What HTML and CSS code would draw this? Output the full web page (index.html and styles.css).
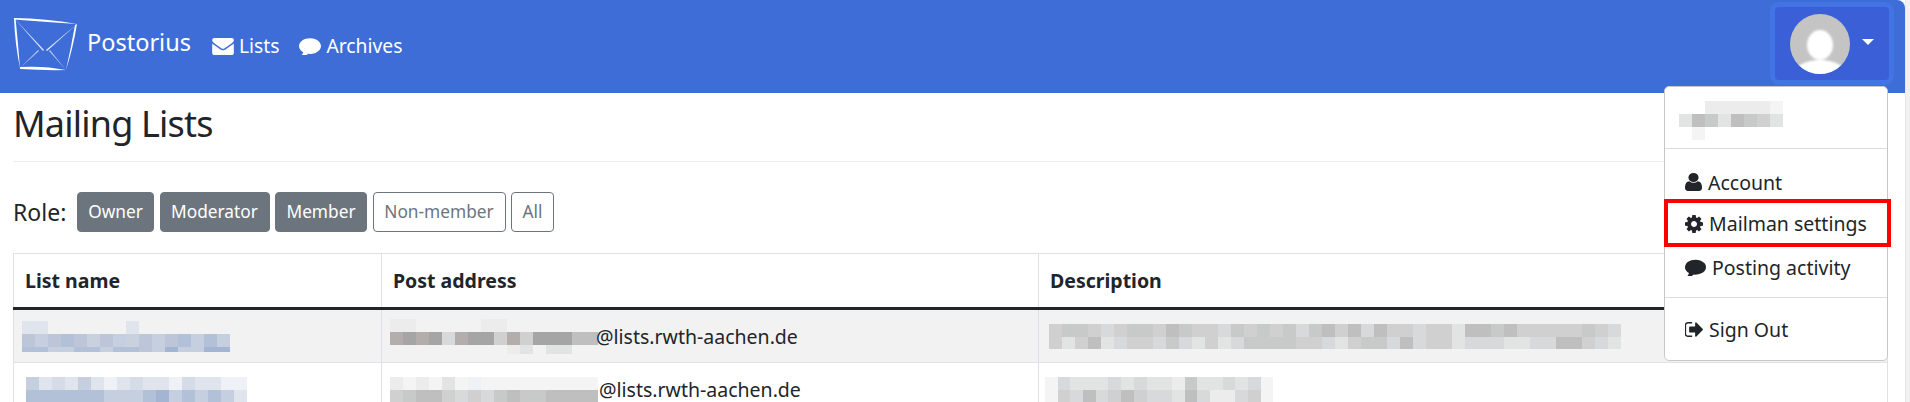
FILE: index.html
```html
<!DOCTYPE html>
<html lang="en">
<head>
    <meta charset="UTF-8">
    <title>Mailing Lists</title>
    <link rel="stylesheet" href="styles.css">
</head>
<body>
    <svg class="icon-defs" xmlns="http://www.w3.org/2000/svg">
        <symbol id="i-envelope" viewBox="0 256 1792 1408"><path d="M1792 710v794q0 66-47 113t-113 47h-1472q-66 0-113-47t-47-113v-794q44 49 101 87 362 246 497 345 57 42 92.5 65.5t94.5 48 110 24.5h2q51 0 110-24.5t94.5-48 92.5-65.5q170-123 498-345 57-39 100-87zm0-294q0 79-49 151t-122 123q-376 261-468 325-10 7-42.5 30.5t-54 38-52 32.5-57.5 27-50 9h-2q-23 0-50-9t-57.5-27-52-32.5-54-38-42.5-30.5q-91-64-262-182.5t-205-142.5q-62-42-117-115.5t-55-136.5q0-78 41.5-130t118.5-52h1472q65 0 112.5 47t47.5 113z"/></symbol>
        <symbol id="i-comment" viewBox="0 256 1792 1344"><path d="M1792 896q0 174-120 321.5t-326 233-450 85.5q-70 0-145-8-198 175-460 242-49 14-114 22-17 2-30.5-9t-17.5-29v-1q-3-4-.5-12t2-10 4.5-9.5l6-9 7-8.5 8-9q7-8 31-34.5t34.5-38 31-39.5 32.5-51 27-59 26-76q-157-89-247.5-220t-90.5-281q0-130 71-248.5t191-204.5 286-136.5 348-50.5q244 0 450 85.5t326 233 120 321.5z"/></symbol>
        <symbol id="i-user" viewBox="256 128 1280 1536" preserveAspectRatio="none"><path d="M1536 1399q0 109-62.5 187t-150.5 78h-854q-88 0-150.5-78t-62.5-187q0-85 8.5-160.5t31.5-152 58.5-131 94-89 134.5-34.5q131 128 313 128t313-128q76 0 134.5 34.5t94 89 58.5 131 31.5 152 8.5 160.5zm-256-887q0 159-112.5 271.5t-271.5 112.5-271.5-112.5-112.5-271.5 112.5-271.5 271.5-112.5 271.5 112.5 112.5 271.5z"/></symbol>
        <symbol id="i-cog" viewBox="128 128 1536 1536"><path d="M1152 896q0-106-75-181t-181-75-181 75-75 181 75 181 181 75 181-75 75-181zm512-109v222q0 12-8 23t-20 13l-185 28q-19 54-39 91 35 50 107 138 10 12 10 25t-9 23q-27 37-99 108t-94 71q-12 0-26-9l-138-108q-44 23-91 38-16 136-29 186-7 28-36 28h-222q-14 0-24.5-8.5t-11.5-21.5l-28-184q-49-16-90-37l-141 107q-10 9-25 9-14 0-25-11-126-114-165-168-7-10-7-23 0-12 8-23 15-21 51-66.5t54-70.5q-27-50-41-99l-183-27q-13-2-21-12.5t-8-23.5v-222q0-12 8-23t19-13l186-28q14-46 39-92-40-57-107-138-10-12-10-24 0-10 9-23 26-36 98.5-107.5t94.5-71.5q13 0 26 10l138 107q44-23 91-38 16-136 29-186 7-28 36-28h222q14 0 24.5 8.5t11.5 21.5l28 184q49 16 90 37l142-107q9-9 24-9 13 0 25 10 129 119 165 170 7 8 7 22 0 12-8 23-15 21-51 66.5t-54 70.5q26 50 41 98l183 28q13 2 21 12.5t8 23.5z"/></symbol>
        <symbol id="i-signout" viewBox="96 256 1536 1280"><path d="M704 1440q0 4 1 20t.5 26.5-3 23.5-10 19.5-20.5 6.5h-320q-119 0-203.5-84.5t-84.5-203.5v-704q0-119 84.5-203.5t203.5-84.5h320q13 0 22.5 9.5t9.5 22.5q0 4 1 20t.5 26.5-3 23.5-10 19.5-20.5 6.5h-320q-66 0-113 47t-47 113v704q0 66 47 113t113 47h312l11.5 1 11.5 3 8 5.5 7 9 2 13.5zm928-544q0 26-19 45l-544 544q-19 19-45 19t-45-19-19-45v-288h-448q-26 0-45-19t-19-45v-384q0-26 19-45t45-19h448v-288q0-26 19-45t45-19 45 19l544 544q19 19 19 45z"/></symbol>
    </svg>

    <div class="page">
        <div class="content">
            <nav class="navbar">
                <a href="#" class="brand">
                    <svg class="brand-logo" viewBox="0 0 64 54" fill="#fff">
                        <path d="M0 0Q32 .5 63 6Q32 4 0 1.500z"/>
                        <path d="M0 0Q1 26 6 50Q4 25 1.500 0z"/>
                        <path d="M6 49Q30 47.500 52 52Q30 52.500 6 51z"/>
                        <path d="M63 6Q59 30 52 52Q57 30 61 7z"/>
                        <path d="M0 0L30 32L29 33z" opacity=".85"/>
                        <path d="M63 6L33 33L32 32z" opacity=".85"/>
                        <path d="M6 50L24 32L25 33z" opacity=".6"/>
                        <path d="M52 52L36 32L35 33z" opacity=".6"/>
                    </svg>
                    <span>Postorius</span>
                </a>
                <a href="#" class="nav-link"><svg class="nav-icon"><use href="#i-envelope"/></svg>Lists</a>
                <a href="#" class="nav-link"><svg class="nav-icon"><use href="#i-comment"/></svg>Archives</a>

                <div class="user-menu">
                    <a href="#" class="user-toggle">
                        <svg class="avatar" viewBox="0 0 60 60">
                            <defs>
                                <clipPath id="avatar-clip"><circle cx="30" cy="30" r="30"/></clipPath>
                                <filter id="avatar-blur"><feGaussianBlur stdDeviation=".8"/></filter>
                            </defs>
                            <circle cx="30" cy="30" r="30" fill="#c4c4c4"/>
                            <g clip-path="url(#avatar-clip)" fill="#fff">
                                <g filter="url(#avatar-blur)">
                                    <ellipse cx="30" cy="31" rx="13" ry="15"/>
                                    <ellipse cx="30" cy="59" rx="25" ry="13"/>
                                </g>
                            </g>
                        </svg>
                        <span class="caret"></span>
                    </a>
                    <div class="dropdown">
                        <div class="dropdown-name">
                            <div class="mosaic m-name">
                                <i class="o"></i><i class="o"></i><i class="f"></i><i class="f"></i><i class="f"></i><i class="f"></i><i class="f"></i><i class="g"></i>
                                <i class="e"></i><i class="a"></i><i class="b"></i><i class="e"></i><i class="a"></i><i class="b"></i><i class="c"></i><i class="e"></i>
                                <i class="o"></i><i class="g"></i><i class="o"></i><i class="o"></i><i class="o"></i><i class="o"></i><i class="o"></i><i class="o"></i>
                            </div>
                        </div>
                        <a href="#" class="dropdown-item item-account"><svg class="item-icon icon-user"><use href="#i-user"/></svg>Account</a>
                        <a href="#" class="dropdown-item item-marked"><svg class="item-icon icon-cog"><use href="#i-cog"/></svg>Mailman settings</a>
                        <a href="#" class="dropdown-item item-activity"><svg class="item-icon icon-comment"><use href="#i-comment"/></svg>Posting activity</a>
                        <a href="#" class="dropdown-item item-signout"><svg class="item-icon icon-signout"><use href="#i-signout"/></svg>Sign Out</a>
                    </div>
                </div>
            </nav>

            <main class="main">
                <h1 class="page-title">Mailing Lists</h1>

                <div class="role-filter">
                    <span class="role-label">Role:</span>
                    <a href="#" class="btn btn-active btn-owner">Owner</a>
                    <a href="#" class="btn btn-active btn-moderator">Moderator</a>
                    <a href="#" class="btn btn-active btn-member">Member</a>
                    <a href="#" class="btn btn-outline btn-nonmember">Non-member</a>
                    <a href="#" class="btn btn-outline btn-all">All</a>
                </div>

                <table class="lists">
                    <colgroup>
                        <col class="col-name">
                        <col class="col-post">
                        <col class="col-desc">
                    </colgroup>
                    <thead>
                        <tr><th>List name</th><th>Post address</th><th>Description</th></tr>
                    </thead>
                    <tbody>
                        <tr class="row-odd">
                            <td>
                                <div class="mosaic m-list1">
                                    <i class="q"></i><i class="q"></i><i class="o"></i><i class="o"></i><i class="o"></i><i class="o"></i><i class="o"></i><i class="o"></i><i class="q"></i><i class="o"></i><i class="o"></i><i class="o"></i><i class="o"></i><i class="o"></i><i class="o"></i><i class="o"></i>
                                    <i class="r"></i><i class="s"></i><i class="r"></i><i class="t"></i><i class="r"></i><i class="p"></i><i class="r"></i><i class="s"></i><i class="p"></i><i class="r"></i><i class="s"></i><i class="r"></i><i class="t"></i><i class="s"></i><i class="t"></i><i class="s"></i>
                                    <i class="t"></i><i class="t"></i><i class="s"></i><i class="s"></i><i class="t"></i><i class="t"></i><i class="s"></i><i class="t"></i><i class="t"></i><i class="r"></i><i class="s"></i><i class="u"></i><i class="s"></i><i class="s"></i><i class="u"></i><i class="u"></i>
                                </div>
                            </td>
                            <td>
                                <div class="address">
                                    <div class="mosaic m-post1">
                                        <i class="f"></i><i class="f"></i><i class="o"></i><i class="o"></i><i class="o"></i><i class="o"></i><i class="o"></i><i class="f"></i><i class="f"></i><i class="o"></i><i class="o"></i><i class="o"></i><i class="o"></i><i class="o"></i><i class="o"></i><i class="o"></i>
                                        <i class="v"></i><i class="w"></i><i class="v"></i><i class="w"></i><i class="d"></i><i class="v"></i><i class="w"></i><i class="w"></i><i class="c"></i><i class="v"></i><i class="c"></i><i class="w"></i><i class="w"></i><i class="w"></i><i class="a"></i><i class="a"></i>
                                        <i class="o"></i><i class="o"></i><i class="o"></i><i class="o"></i><i class="o"></i><i class="o"></i><i class="o"></i><i class="o"></i><i class="o"></i><i class="f"></i><i class="e"></i><i class="o"></i><i class="e"></i><i class="e"></i><i class="o"></i><i class="o"></i>
                                    </div>
                                    <span>@lists.rwth-aachen.de</span>
                                </div>
                            </td>
                            <td>
                                <div class="mosaic m-desc1">
                                    <i class="c"></i><i class="b"></i><i class="b"></i><i class="c"></i><i class="d"></i><i class="c"></i><i class="b"></i><i class="b"></i><i class="c"></i><i class="a"></i><i class="b"></i><i class="c"></i><i class="c"></i><i class="d"></i><i class="b"></i><i class="c"></i><i class="b"></i><i class="c"></i><i class="b"></i><i class="d"></i><i class="b"></i><i class="a"></i><i class="c"></i><i class="a"></i><i class="d"></i><i class="a"></i><i class="c"></i><i class="c"></i><i class="d"></i><i class="c"></i><i class="c"></i><i class="e"></i><i class="a"></i><i class="a"></i><i class="b"></i><i class="a"></i><i class="c"></i><i class="c"></i><i class="c"></i><i class="c"></i><i class="c"></i><i class="b"></i><i class="c"></i><i class="d"></i>
                                    <i class="c"></i><i class="e"></i><i class="c"></i><i class="a"></i><i class="e"></i><i class="d"></i><i class="c"></i><i class="c"></i><i class="d"></i><i class="b"></i><i class="d"></i><i class="e"></i><i class="c"></i><i class="e"></i><i class="d"></i><i class="b"></i><i class="b"></i><i class="b"></i><i class="b"></i><i class="c"></i><i class="c"></i><i class="d"></i><i class="e"></i><i class="c"></i><i class="b"></i><i class="b"></i><i class="d"></i><i class="a"></i><i class="d"></i><i class="c"></i><i class="c"></i><i class="e"></i><i class="d"></i><i class="d"></i><i class="d"></i><i class="e"></i><i class="e"></i><i class="d"></i><i class="d"></i><i class="a"></i><i class="a"></i><i class="c"></i><i class="d"></i><i class="e"></i>
                                </div>
                            </td>
                        </tr>
                        <tr>
                            <td>
                                <div class="mosaic m-list2">
                                    <i class="s"></i><i class="q"></i><i class="s2"></i><i class="q"></i><i class="s"></i><i class="q"></i><i class="x"></i><i class="q"></i><i class="s2"></i><i class="q"></i><i class="q"></i><i class="x"></i><i class="s2"></i><i class="q"></i><i class="q"></i><i class="x"></i><i class="x"></i>
                                    <i class="t"></i><i class="t"></i><i class="t"></i><i class="t"></i><i class="t"></i><i class="t"></i><i class="s"></i><i class="s"></i><i class="s"></i><i class="t"></i><i class="u"></i><i class="s"></i><i class="t"></i><i class="s"></i><i class="t"></i><i class="s"></i><i class="q"></i>
                                </div>
                            </td>
                            <td>
                                <div class="address">
                                    <div class="mosaic m-post2">
                                        <i class="f"></i><i class="g"></i><i class="f"></i><i class="g"></i><i class="e"></i><i class="g"></i><i class="x"></i><i class="g"></i><i class="g"></i><i class="g"></i><i class="g"></i><i class="g"></i><i class="g"></i><i class="g"></i><i class="g"></i><i class="g"></i>
                                        <i class="c"></i><i class="b"></i><i class="a"></i><i class="a"></i><i class="c"></i><i class="d"></i><i class="c"></i><i class="d"></i><i class="b"></i><i class="a"></i><i class="b"></i><i class="b"></i><i class="a"></i><i class="a"></i><i class="a"></i><i class="a"></i>
                                    </div>
                                    <span>@lists.rwth-aachen.de</span>
                                </div>
                            </td>
                            <td>
                                <div class="mosaic m-desc2">
                                    <i class="g"></i><i class="d"></i><i class="e"></i><i class="e"></i><i class="e"></i><i class="d"></i><i class="e"></i><i class="d"></i><i class="e"></i><i class="e"></i><i class="f"></i><i class="b"></i><i class="e"></i><i class="e"></i><i class="d"></i><i class="e"></i><i class="d"></i><i class="g"></i>
                                    <i class="g"></i><i class="c"></i><i class="d"></i><i class="a"></i><i class="d"></i><i class="c"></i><i class="a"></i><i class="c"></i><i class="d"></i><i class="d"></i><i class="e"></i><i class="a"></i><i class="d"></i><i class="f"></i><i class="f"></i><i class="d"></i><i class="c"></i><i class="g"></i>
                                </div>
                            </td>
                        </tr>
                    </tbody>
                </table>
            </main>
        </div>
        <div class="scrollbar"></div>
    </div>
</body>
</html>
```

FILE: styles.css
```css
* {
    margin: 0;
    padding: 0;
    box-sizing: border-box;
}
html, body {
    height: 402px;
    overflow: hidden;
}
body {
    font-family: "Noto Sans", "Open Sans", sans-serif;
    color: #212529;
    background: #fff;
}
a {
    text-decoration: none;
    color: inherit;
}
.icon-defs {
    display: none;
}
.page {
    display: flex;
    height: 402px;
}
.content {
    flex: 1;
    min-width: 0;
}
.scrollbar {
    width: 5px;
    background: #f1f1f1;
    border-left: 1px solid #e6e6e6;
}

/* navbar */
.navbar {
    display: flex;
    align-items: flex-start;
    height: 93px;
    padding-left: 14px;
    background: #3f6dd8;
    color: #fff;
    border-top-right-radius: 8px;
}
.brand {
    display: flex;
    align-items: flex-start;
    margin-right: 21px;
    padding-top: 18px;
    font-size: 23.5px;
}
.brand-logo {
    width: 64px;
    height: 54px;
    margin-right: 9px;
}
.brand span {
    line-height: 32px;
    padding-top: 8px;
}
.nav-link {
    display: flex;
    align-items: center;
    margin-right: 20px;
    padding-top: 33px;
    font-size: 19.3px;
    line-height: 26px;
}
.nav-icon {
    width: 22px;
    height: 17px;
    margin-right: 5px;
    fill: #fff;
}
.user-menu {
    position: relative;
    margin-left: auto;
    margin-right: 11px;
    margin-top: 2px;
}
.user-toggle {
    display: flex;
    align-items: center;
    width: 124px;
    height: 83px;
    padding: 0 0 0 15px;
    background: #3a5fd6;
    border: 5px solid #4274e4;
    border-radius: 9px;
}
.avatar {
    width: 60px;
    height: 60px;
}
.caret {
    margin-left: 12px;
    margin-top: -3px;
    border-top: 6px solid #fff;
    border-left: 6px solid transparent;
    border-right: 6px solid transparent;
}

/* dropdown */
.dropdown {
    position: absolute;
    top: 84px;
    right: 6px;
    width: 224px;
    height: 275px;
    background: #fff;
    color: #212529;
    border: 1px solid #c8c8c8;
    border-radius: 5px;
    z-index: 10;
}
.dropdown-name {
    height: 62px;
    padding: 14px 0 0 14px;
    border-bottom: 1px solid #dcdcdc;
}
.dropdown-item {
    display: flex;
    align-items: center;
    padding-left: 20px;
    font-size: 19.5px;
}
.item-icon {
    flex: none;
    margin-right: 6px;
    fill: #212529;
}
.icon-user {
    width: 17px;
    height: 18px;
}
.icon-cog {
    width: 18px;
    height: 18px;
}
.icon-comment {
    width: 21px;
    height: 17px;
}
.icon-signout {
    width: 18px;
    height: 15px;
}
.item-account {
    height: 50px;
    padding-top: 16px;
}
.item-marked {
    height: 48px;
    margin-right: -4px;
    margin-left: -1px;
    padding-left: 17px;
    padding-top: 1px;
    border: 4px solid #f00;
}
.item-activity {
    height: 51px;
    padding-bottom: 10px;
    border-bottom: 1px solid #dcdcdc;
}
.item-signout {
    height: 63px;
}

/* main */
.main {
    padding: 0 17px 0 13px;
}
.page-title {
    height: 69px;
    font-size: 36px;
    font-weight: 400;
    line-height: 62px;
    letter-spacing: -0.8px;
    border-bottom: 1px solid #eceeef;
}
.role-filter {
    display: flex;
    align-items: center;
    gap: 5.5px;
    height: 40px;
    margin: 30px 0 21px;
}
.role-label {
    width: 58.5px;
    font-size: 23px;
}
.btn {
    height: 40px;
    font-size: 17.3px;
    line-height: 38px;
    text-align: center;
    border: 1px solid #6c757d;
    border-radius: 4px;
}
.btn-owner {
    width: 77px;
}
.btn-moderator {
    width: 110px;
}
.btn-member {
    width: 92px;
}
.btn-nonmember {
    width: 133px;
}
.btn-all {
    width: 43px;
}
.btn-active {
    background: #6c757d;
    color: #fff;
}
.btn-outline {
    color: #6c757d;
    background: #fff;
}

/* table */
.lists {
    width: 100%;
    table-layout: fixed;
    border-collapse: collapse;
    border: 1px solid #dee2e6;
    font-size: 19.5px;
}
.col-name {
    width: 368px;
}
.col-post {
    width: 657px;
}
.lists th, .lists td {
    border: 1px solid #dee2e6;
    padding: 0 11px;
    text-align: left;
}
.lists th {
    height: 55px;
    font-weight: 700;
    border-bottom: 3px solid #212529;
}
.lists td {
    height: 54px;
}
.row-odd {
    background: #f2f2f2;
}
.address {
    display: flex;
    align-items: center;
}

/* pixelated parts of the screenshot */
.mosaic {
    display: grid;
    flex: none;
}
.mosaic i {
    display: block;
}
.m-name {
    grid-template-columns: repeat(8, 13px);
    grid-auto-rows: 13px;
}
.m-list1 {
    grid-template-columns: repeat(16, 13px);
    grid-template-rows: 13px 13px 5px;
    margin-left: -3px;
}
.m-post1 {
    grid-template-columns: repeat(16, 13px);
    grid-template-rows: 13px 13px 9px;
    margin-left: -3px;
    margin-right: -2px;
}
.m-desc1 {
    grid-template-columns: repeat(44, 13px);
    grid-template-rows: 13px 12px;
    margin-left: -1px;
}
.m-list2 {
    grid-template-columns: repeat(17, 13px);
    grid-auto-rows: 13px;
    margin-left: 1px;
}
.m-post2 {
    grid-template-columns: repeat(16, 13px);
    grid-auto-rows: 13px;
    margin-left: -3px;
    margin-right: 1px;
}
.m-desc2 {
    grid-template-columns: repeat(18, 12.7px);
    grid-auto-rows: 13px;
    margin-left: -5px;
}
.o { background: transparent; }
.a { background: #bfbfc0; }
.b { background: #c8c9c9; }
.c { background: #d0d0d0; }
.d { background: #d8d9da; }
.e { background: #e2e3e3; }
.f { background: #ececec; }
.g { background: #f4f4f4; }
.v { background: #b3aeac; }
.w { background: #a5a5a6; }
.x { background: #eef1f6; }
.p { background: #c9d0de; }
.q { background: #e0e4ec; }
.r { background: #bcc6d8; }
.s { background: #c6cfdf; }
.s2 { background: #d5dce8; }
.t { background: #b3c1d8; }
.u { background: #a3b5d3; }
```
